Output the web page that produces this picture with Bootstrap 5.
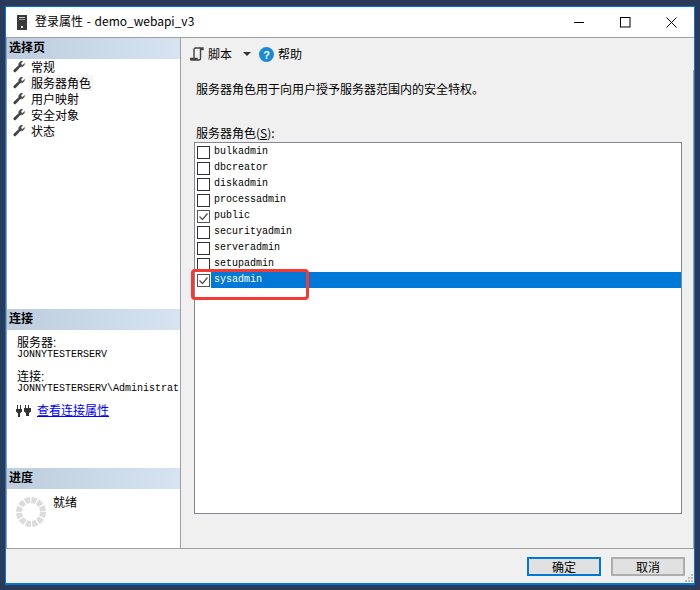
<!DOCTYPE html>
<html lang="zh"><head><meta charset="utf-8"><title>登录属性</title>
<link href="https://cdn.jsdelivr.net/npm/bootstrap@5.3.0/dist/css/bootstrap.min.css" rel="stylesheet">
<style>
html,body{height:590px;overflow:hidden}
body{background:#2a3a58;padding:6px 5px 5px;font:12px/12px "Noto Sans CJK SC","Liberation Sans",sans-serif;color:#000}
.dlg{position:relative;width:690px;height:579px;border:1px solid #0078d7;border-width:1px 1px 2px 1px;background:#f0f0f0}
.ttl{height:31px;background:#fff;border-bottom:1px solid #a0a0a0;flex:none}
.ttl-icon{margin-left:11px;margin-right:8px}
.ttl-text{font:12px/14px "Noto Sans CJK SC",sans-serif;margin-top:-2px;word-spacing:1px}
.winbtns{margin-left:auto;margin-right:17px;gap:35px}
.mainrow{height:511px;border-bottom:1px solid #a0a0a0;flex:none}
.side{width:173px;flex:none;background:#fff;border-left:1px solid #a0a0a0;border-right:1px solid #a0a0a0;box-sizing:content-box;overflow:hidden}
.hd{height:21px;background:linear-gradient(90deg,#bdcddd,#d6e4f2);font-weight:700;font-size:12px;line-height:18px;padding-left:2px}
.navlist{padding:0 0 0 6px;margin:0;list-style:none;height:228px}
.navlist li{height:16px;display:flex;align-items:center;gap:4px}
.navlist span{padding:0 2px;height:16px;line-height:15px}
.navlist .cur{background:#f5f5f5}
.infoblk{height:138px;padding:7px 0 0 10px;white-space:nowrap;overflow:hidden}
.lt{line-height:12px;height:12px;font-family:"Liberation Sans","Noto Sans CJK SC",sans-serif}
.mono{font:10px/11px "Liberation Mono","DejaVu Sans Mono",monospace}
.gap1{margin-top:11px}
.plug{margin-left:-1px;margin-top:9px;gap:6px}
.plug a{color:#00f;text-decoration:underline;line-height:14px}
.prog{padding:8px 0 0 9px;gap:7px}
.pane{flex:1;min-width:0}
.tools{height:32px;padding-left:9px;align-items:center;flex:none}
.tools .lbl{line-height:14px}
.scr{margin-right:4px}
.caret{width:0;height:0;border:4px solid transparent;border-top:4px solid #333;border-bottom:0;margin:0 8px 0 11px}
.content{flex:1;border-right:1px solid #a0a0a0;padding:12px 11px 0 13px}
.desc{line-height:14px;margin-left:2px}
.slabel{margin:30px 0 2px 2px;line-height:14px}
.rolebox{height:372px;background:#fff;border:1px solid #828790;padding-top:1px;border-radius:0}
.role{height:16px;display:flex;align-items:center;border:0;padding:0 0 0 2px;background:transparent;border-radius:0;color:#000;font:10px/16px "Liberation Mono",monospace;letter-spacing:0}
.role .form-check-input{width:13px;height:13px;margin:0 1px 0 0;border:1px solid #333;border-radius:0;flex:none;background-color:#fff;opacity:1}
.role .form-check-input:checked{background-color:#fff;border-color:#555;background-image:url("data:image/svg+xml,%3Csvg xmlns='http://www.w3.org/2000/svg' viewBox='0 0 13 13'%3E%3Cpath d='M2.500 6.500l3 3 5-6' fill='none' stroke='%23555' stroke-width='1.300'/%3E%3C/svg%3E");background-size:13px}
.role span{flex:1;line-height:16px;padding-left:3px;height:16px}
.role.sel span{background:#0078d7;color:#fff}
.foot{height:35px;flex:none;align-items:flex-start;justify-content:flex-end;gap:10px;padding:8px 9px 0 0}
.dbtn{width:74px;height:19px;padding:0;background:#e1e1e1;border:2px solid #adadad;border-radius:0;font-size:12px;line-height:14px;color:#000}
.dbtn.pri{border-color:#0078d7}
.mark-red{position:absolute;left:185px;top:262px;width:118px;height:31px;border:3px solid #f43a32;border-radius:4px}
.grip{position:absolute;right:1px;bottom:1px}
.wr{fill:#444;stroke:#444;stroke-width:.6}
</style></head><body>
<div class="dlg d-flex flex-column">
 <div class="ttl d-flex align-items-center">
  <svg class="ttl-icon" width="10" height="15" viewBox="0 0 10 15"><rect width="10" height="15" fill="#3a3a3a"/><rect x="2" y="2" width="6" height="1" fill="#ccc"/><rect x="2" y="4" width="6" height="1" fill="#999"/><rect x="4" y="11" width="2" height="2" fill="#ddd"/></svg>
  <div class="ttl-text">登录属性 - demo_webapi_v3</div>
  <div class="winbtns d-flex align-items-center">
   <svg width="11" height="11" viewBox="0 0 11 11"><path d="M0 5.500h10" stroke="#000"/></svg>
   <svg width="11" height="11" viewBox="0 0 11 11"><rect x=".5" y=".5" width="9.500" height="9.500" fill="none" stroke="#000"/></svg>
   <svg width="11" height="11" viewBox="0 0 11 11"><path d="M.5.5l10 10M10.500.5l-10 10" stroke="#000" fill="none"/></svg>
  </div>
 </div>
 <div class="mainrow d-flex">
  <div class="side">
   <div class="hd">选择页</div>
   <ul class="navlist">
    <li><svg width="12" height="12" viewBox="0 0 12 12"><path class="wr" d="M11.500 2.500a3.300 3.300 0 0 1-4.200 3.200L3 10.500a1.300 1.300 0 0 1-2-1.700l4.800-4.400A3.300 3.300 0 0 1 9.500.4L7.800 2.400l.6 1.500 1.400.3z"/></svg><span>常规</span></li>
    <li><svg width="12" height="12" viewBox="0 0 12 12"><path class="wr" d="M11.500 2.500a3.300 3.300 0 0 1-4.200 3.200L3 10.500a1.300 1.300 0 0 1-2-1.700l4.800-4.400A3.300 3.300 0 0 1 9.500.4L7.800 2.400l.6 1.500 1.400.3z"/></svg><span class="cur">服务器角色</span></li>
    <li><svg width="12" height="12" viewBox="0 0 12 12"><path class="wr" d="M11.500 2.500a3.300 3.300 0 0 1-4.200 3.200L3 10.500a1.300 1.300 0 0 1-2-1.700l4.800-4.400A3.300 3.300 0 0 1 9.500.4L7.800 2.400l.6 1.500 1.400.3z"/></svg><span>用户映射</span></li>
    <li><svg width="12" height="12" viewBox="0 0 12 12"><path class="wr" d="M11.500 2.500a3.300 3.300 0 0 1-4.200 3.200L3 10.500a1.300 1.300 0 0 1-2-1.700l4.800-4.400A3.300 3.300 0 0 1 9.500.4L7.800 2.400l.6 1.500 1.400.3z"/></svg><span>安全对象</span></li>
    <li><svg width="12" height="12" viewBox="0 0 12 12"><path class="wr" d="M11.500 2.500a3.300 3.300 0 0 1-4.200 3.200L3 10.500a1.300 1.300 0 0 1-2-1.700l4.800-4.400A3.300 3.300 0 0 1 9.500.4L7.800 2.400l.6 1.500 1.400.3z"/></svg><span>状态</span></li>
   </ul>
   <div class="hd" style="margin-top:22px">连接</div>
   <div class="infoblk">
    <div class="lt">服务器:</div><div class="mono">JONNYTESTERSERV</div>
    <div class="lt gap1">连接:</div><div class="mono">JONNYTESTERSERV\Administrat</div>
    <div class="plug d-flex align-items-center">
     <svg width="15" height="13" viewBox="0 0 15 13"><path d="M1 1v4h1V1zm3 0v4h1V1zM0 5h6v2.500L4 9.500V13H2V9.500L0 7.500zM9 1v3h1V1zm3 0v3h1V1zM8 4h7v3.500L13 9v3h-3V9L8 7.500z" fill="#333"/></svg>
     <a href="#">查看连接属性</a>
    </div>
   </div>
   <div class="hd">进度</div>
   <div class="prog d-flex">
    <svg width="30" height="30" viewBox="0 0 30 30"><circle cx="15" cy="15" r="12" fill="none" stroke="#dcdcdc" stroke-width="6" stroke-dasharray="5 1.283"/></svg>
    <div style="line-height:12px;margin-top:-1px">就绪</div>
   </div>
  </div>
  <div class="pane d-flex flex-column">
   <div class="tools d-flex">
    <svg width="14" height="14" viewBox="0 0 14 14" class="scr"><path d="M4 12V2.500A1.500 1.500 0 0 1 5.500 1H13v1.500H10.500V11.500A1.500 1.500 0 0 1 9 13H1.500A1.500 1.500 0 0 1 0 11.500h7V13" fill="none" stroke="#444" stroke-width="1.400"/></svg>
    <span class="lbl">脚本</span><span class="caret"></span>
    <svg width="15" height="15" viewBox="0 0 15 15" class="me-1"><circle cx="7.500" cy="7.500" r="7.500" fill="#1a8ad4"/><text x="7.500" y="11.500" text-anchor="middle" fill="#fff" font-family="Liberation Sans" font-weight="700" font-size="11">?</text></svg>
    <span class="lbl">帮助</span>
   </div>
   <div class="content d-flex flex-column">
    <div class="desc">服务器角色用于向用户授予服务器范围内的安全特权。</div>
    <label class="slabel">服务器角色(<u>S</u>):</label>
    <div class="rolebox">
     <label class="role"><input class="form-check-input" type="checkbox"><span>bulkadmin</span></label>
     <label class="role"><input class="form-check-input" type="checkbox"><span>dbcreator</span></label>
     <label class="role"><input class="form-check-input" type="checkbox"><span>diskadmin</span></label>
     <label class="role"><input class="form-check-input" type="checkbox"><span>processadmin</span></label>
     <label class="role"><input class="form-check-input" type="checkbox" checked><span>public</span></label>
     <label class="role"><input class="form-check-input" type="checkbox"><span>securityadmin</span></label>
     <label class="role"><input class="form-check-input" type="checkbox"><span>serveradmin</span></label>
     <label class="role"><input class="form-check-input" type="checkbox"><span>setupadmin</span></label>
     <label class="role sel"><input class="form-check-input" type="checkbox" checked><span>sysadmin</span></label>
    </div>
   </div>
  </div>
 </div>
 <div class="foot d-flex">
  <button class="btn dbtn pri" type="button">确定</button>
  <button class="btn dbtn" type="button">取消</button>
 </div>
 <div class="mark-red"></div>
 <svg class="grip" width="8" height="8" viewBox="0 0 8 8"><path d="M6 0h2v2H6zM3 3h2v2H3zM6 3h2v2H6zM0 6h2v2H0zM3 6h2v2H3zM6 6h2v2H6z" fill="#bbb"/></svg>
</div>
</body></html>
